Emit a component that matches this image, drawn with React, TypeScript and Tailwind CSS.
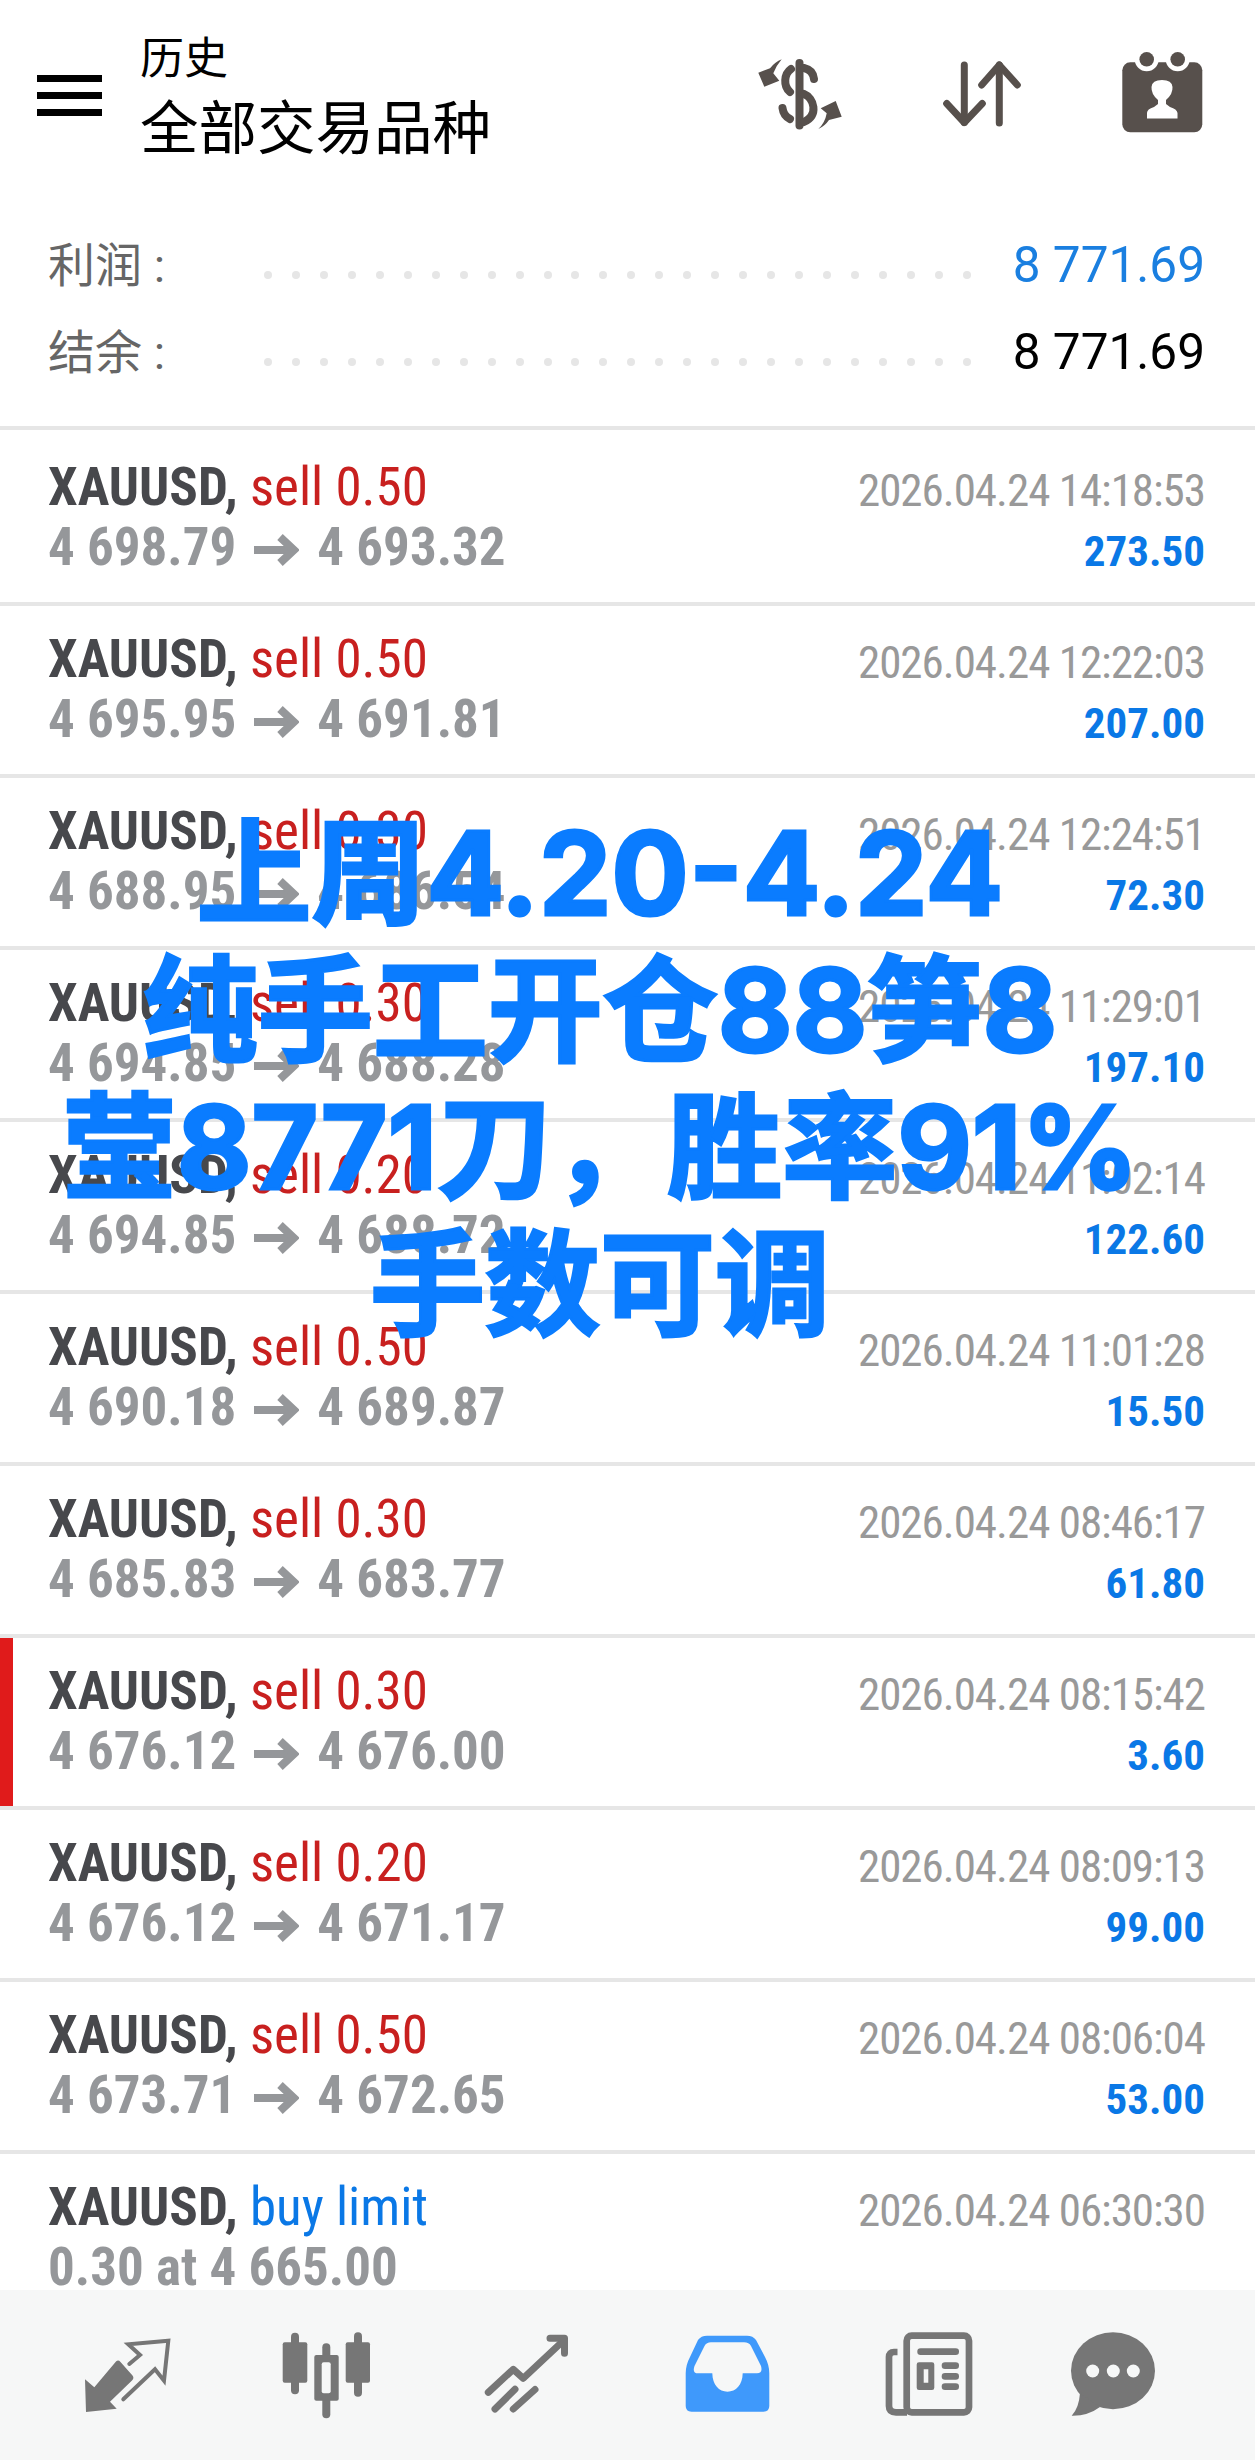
type Trade = {
  side: string;
  from: string;
  to: string;
  time: string;
  profit: string;
  flagged?: boolean;
};

const trades: Trade[] = [
  { side: 'sell 0.50', from: '4 698.79', to: '4 693.32', time: '2026.04.24 14:18:53', profit: '273.50' },
  { side: 'sell 0.50', from: '4 695.95', to: '4 691.81', time: '2026.04.24 12:22:03', profit: '207.00' },
  { side: 'sell 0.30', from: '4 688.95', to: '4 686.54', time: '2026.04.24 12:24:51', profit: '72.30' },
  { side: 'sell 0.30', from: '4 694.85', to: '4 688.28', time: '2026.04.24 11:29:01', profit: '197.10' },
  { side: 'sell 0.20', from: '4 694.85', to: '4 688.72', time: '2026.04.24 11:02:14', profit: '122.60' },
  { side: 'sell 0.50', from: '4 690.18', to: '4 689.87', time: '2026.04.24 11:01:28', profit: '15.50' },
  { side: 'sell 0.30', from: '4 685.83', to: '4 683.77', time: '2026.04.24 08:46:17', profit: '61.80' },
  { side: 'sell 0.30', from: '4 676.12', to: '4 676.00', time: '2026.04.24 08:15:42', profit: '3.60', flagged: true },
  { side: 'sell 0.20', from: '4 676.12', to: '4 671.17', time: '2026.04.24 08:09:13', profit: '99.00' },
  { side: 'sell 0.50', from: '4 673.71', to: '4 672.65', time: '2026.04.24 08:06:04', profit: '53.00' },
];

const headline = ['上周4.20-4.24', '纯手工开仓88笋8', '莹8771刀，胜率91%', '手数可调'];

function PriceArrow() {
  return (
    <svg viewBox="0 0 45 32" className="inline-block w-[45px] h-[32px] mx-[18px] align-[-1px]" fill="none" stroke="#95979a" strokeWidth="8">
      <path d="M0 16H40" />
      <path d="M26 3L40 16L26 29" />
    </svg>
  );
}

function DollarSwapIcon() {
  return (
    <svg viewBox="0 0 100 90" className="w-[100px] h-[90px]" fill="none" stroke="#57504c" strokeWidth="8" strokeLinecap="round">
      <path d="M49.5 13V75.5" />
      <path d="M54 18Q63 20 64 29" />
      <path d="M41 19C34 24 33 36 40 42" />
      <path d="M54 44C64 48 69 65 54 72" />
      <path d="M32.5 58Q33.5 66 40 69" />
      <path d="M31.7 9.3Q25 12 20 18.3L8.3 22.7L14.3 36.7L29.3 30.7L23.3 23.3Q26.7 15 31.7 9.3Z" fill="#57504c" stroke="none" />
      <path d="M68.3 79Q75 76 79 70L91.7 66.7L85.7 51L70.7 58.3L76.7 63.3Q75 73 68.3 79Z" fill="#57504c" stroke="none" />
    </svg>
  );
}

function SortIcon() {
  return (
    <svg viewBox="0 0 100 90" className="w-[100px] h-[90px]" fill="none" stroke="#57504c" strokeWidth="7" strokeLinecap="round" strokeLinejoin="round">
      <path d="M29.3 15V72.5" />
      <path d="M11.7 53.5L29.3 72.5L47.3 53.5" />
      <path d="M64.3 15V73" />
      <path d="M46.7 35L64.3 15L82.3 35" />
    </svg>
  );
}

function CalendarIcon() {
  return (
    <svg viewBox="0 0 100 90" className="w-[100px] h-[90px]">
      <rect x="10.3" y="12.3" width="80" height="70" rx="8" fill="#57504c" />
      <circle cx="34.7" cy="9.3" r="12" fill="#fff" />
      <circle cx="65.7" cy="9.3" r="12" fill="#fff" />
      <circle cx="34.7" cy="9.3" r="7.3" fill="#57504c" />
      <circle cx="65.7" cy="9.3" r="7.3" fill="#57504c" />
      <path d="M35 68.5V63Q35 59 42 57L46 54V50Q39 44 39.5 37Q40 30 50 30Q60 30 60.5 37Q61 44 54 50V54L58 57Q65 59 65.5 63V68.5Z" fill="#fff" />
    </svg>
  );
}

function TradeIcon() {
  return (
    <svg viewBox="0 0 100 100" className="w-[100px] h-[100px]" fill="#767676">
      <path d="M9 87L8 54.3L17.3 62.3L39 36.5Q41.3 34.5 43.5 37L55.5 50.5Q57.5 53 55 55.5L33 76.7L39.7 83.7Z" />
      <path d="M46.3 74.3L78 44.3L87 55.7L91.3 15.7L51.3 19.3L63 30L52.3 39" fill="none" stroke="#767676" strokeWidth="4" strokeLinecap="round" />
    </svg>
  );
}

function QuotesIcon() {
  return (
    <svg viewBox="0 0 100 100" className="w-[100px] h-[100px]" fill="#767676">
      <rect x="6.7" y="17.3" width="24.6" height="40.4" rx="2" />
      <rect x="15" y="7.7" width="8" height="61.6" rx="4" />
      <rect x="69.7" y="17.3" width="24.3" height="40.4" rx="2" />
      <rect x="78" y="7.3" width="8" height="64.4" rx="4" />
      <rect x="46.3" y="18.3" width="8" height="75" rx="4" />
      <rect x="38.3" y="30" width="24.4" height="45.7" rx="2" />
      <rect x="45.7" y="37.3" width="9" height="31" rx="2" fill="#f6f7f7" />
    </svg>
  );
}

function ChartIcon() {
  return (
    <svg viewBox="0 0 100 100" className="w-[100px] h-[100px]" fill="none" stroke="#767676" strokeWidth="7" strokeLinecap="round" strokeLinejoin="round">
      <path d="M12.3 67.3L37.3 44.3L47.3 53.3L86 17" />
      <path d="M74 13.3H88.5V28.3" />
      <path d="M19 84L39 64.3" />
      <path d="M37.3 84L59 64.5" />
    </svg>
  );
}

function InboxIcon() {
  return (
    <svg viewBox="0 0 100 100" className="w-[100px] h-[100px]" fill="#3f99fb">
      <path
        fillRule="evenodd"
        d="M30 10.7H70Q76 10.7 79 15L88 32Q92.3 40 92.3 48.3V81Q92.3 86.7 86.5 86.7H14.5Q8.7 86.7 8.7 81V48.3Q8.7 40 13 32L21 15Q24 10.7 30 10.7ZM34 17.3Q29.5 17.3 27.5 21L17.5 41Q15 48.3 21 48.3H35.3C35.5 60 42 66.7 50.5 66.7C59 66.7 65.5 60 65.7 48.3H80Q86 48.3 84 41L74 21Q72 17.3 67 17.3Z"
      />
    </svg>
  );
}

function NewsIcon() {
  return (
    <svg viewBox="0 0 100 100" className="w-[100px] h-[100px]" fill="#767676">
      <rect x="27.7" y="10.7" width="62.3" height="76.6" rx="5" fill="none" stroke="#767676" strokeWidth="6.7" />
      <path d="M18.5 27H15Q10 27 10 32V81Q10 87.3 17 87.3H28" fill="none" stroke="#767676" strokeWidth="6.7" />
      <rect x="38.3" y="23.3" width="41.7" height="6.7" rx="3.3" />
      <path fillRule="evenodd" d="M40 37.3H53Q55.3 37.3 55.3 39.5V62.8Q55.3 65 53 65H40Q37.7 65 37.7 62.8V39.5Q37.7 37.3 40 37.3ZM44.7 44.3V57.7H49.3V44.3Z" />
      <rect x="62.7" y="37.3" width="17.3" height="6.7" rx="3.3" />
      <rect x="62.7" y="48" width="17.3" height="6.7" rx="3.3" />
      <rect x="62.7" y="58.3" width="17.3" height="6.7" rx="3.3" />
    </svg>
  );
}

function ChatIcon() {
  return (
    <svg viewBox="0 0 100 100" className="w-[100px] h-[100px]" fill="#767676">
      <ellipse cx="50" cy="45.7" rx="42" ry="38.5" />
      <path d="M17 68Q16 83 8.7 90.7Q25 91 37 82Z" />
      <circle cx="29.7" cy="46" r="6.5" fill="#f6f7f7" />
      <circle cx="50.3" cy="46" r="6.5" fill="#f6f7f7" />
      <circle cx="70.3" cy="46" r="6.5" fill="#f6f7f7" />
    </svg>
  );
}

function SummaryRow({ label, value, valueClass }: { label: string; value: string; valueClass: string }) {
  return (
    <div className="flex items-center h-[87px]">
      <span className="w-[216px] shrink-0 text-[47px] leading-none text-[#666]">{label}</span>
      <div className="w-[707px] flex justify-between mt-[18px]">
        {Array.from({ length: 26 }).map((_, i) => (
          <span key={i} className="w-[8px] h-[8px] rounded-full bg-[#e6e6e6]" />
        ))}
      </div>
      <span className={`ml-auto text-[49.5px] leading-none ${valueClass}`}>{value}</span>
    </div>
  );
}

function TradeRow({ trade }: { trade: Trade }) {
  return (
    <div className="relative h-[172px] border-b-4 border-[#e6e6e6] pl-[48px] pr-[50px] pt-[23px] flex justify-between [font-stretch:condensed]">
      {trade.flagged && <div className="absolute left-0 top-0 bottom-0 w-[13px] bg-[#e01b1b]" />}
      <div>
        <div className="text-[53px] leading-[60px]">
          <span className="font-bold text-[#47484c]">XAUUSD,</span>{' '}
          <span className="text-[#c8201f]">{trade.side}</span>
        </div>
        <div className="text-[53px] leading-[60px] font-bold text-[#95979a]">
          {trade.from}
          <PriceArrow />
          {trade.to}
        </div>
      </div>
      <div className="text-right pt-[4px]">
        <div className="text-[45px] leading-[60px] tracking-[-1px] text-[#999]">{trade.time}</div>
        <div className="text-[43px] leading-[60px] font-bold text-[#0a78e6]">{trade.profit}</div>
      </div>
    </div>
  );
}

export default function App() {
  return (
    <div className="relative w-[1255px] h-[2460px] overflow-hidden bg-white flex flex-col font-['Roboto','Noto_Sans_CJK_SC',sans-serif]">
      {/* top bar */}
      <header className="h-[200px] shrink-0 pl-[37px] pr-[43px] pb-[10px] flex items-center">
        <div className="w-[65px] flex flex-col gap-[10px]">
          <div className="h-[7px] bg-black" />
          <div className="h-[7px] bg-black" />
          <div className="h-[7px] bg-black" />
        </div>
        <div className="ml-[38px] mt-[10px]">
          <div className="text-[44px] leading-[52px] text-black">历史</div>
          <div className="mt-[6px] text-[58.5px] leading-[76px] text-black">全部交易品种</div>
        </div>
        <div className="ml-auto flex items-center">
          <DollarSwapIcon />
          <div className="ml-[85px]"><SortIcon /></div>
          <div className="ml-[77px]"><CalendarIcon /></div>
        </div>
      </header>

      <section className="h-[230px] shrink-0 pt-[22px] pl-[48px] pr-[50px] border-b-4 border-[#e6e6e6]">
        <SummaryRow label="利润 :" value="8 771.69" valueClass="text-[#1a7fe0]" />
        <SummaryRow label="结余 :" value="8 771.69" valueClass="text-black" />
      </section>

      <main className="flex-1 overflow-hidden pt-[4px]">
        {trades.map((t) => (
          <TradeRow key={t.time} trade={t} />
        ))}
        {/* pending order, cut off by the tab bar */}
        <div className="pl-[48px] pr-[50px] pt-[23px] flex justify-between [font-stretch:condensed]">
          <div>
            <div className="text-[53px] leading-[60px]">
              <span className="font-bold text-[#47484c]">XAUUSD,</span>{' '}
              <span className="text-[#0a78e6]">buy limit</span>
            </div>
            <div className="text-[53px] leading-[60px] font-bold text-[#95979a]">0.30 at 4 665.00</div>
          </div>
          <div className="pt-[4px] text-[45px] leading-[60px] tracking-[-1px] text-[#999]">2026.04.24 06:30:30</div>
        </div>
      </main>

      {/* bottom tabs */}
      <nav className="h-[170px] shrink-0 bg-[#f6f7f7] pt-[35px] pl-[77px] flex items-start">
        <TradeIcon />
        <div className="ml-[99px]"><QuotesIcon /></div>
        <div className="ml-[100px]"><ChartIcon /></div>
        <div className="ml-[101px]"><InboxIcon /></div>
        <div className="ml-[102px]"><NewsIcon /></div>
        <div className="ml-[84px]"><ChatIcon /></div>
      </nav>

      {/* promo caption laid over the list */}
      <div className="absolute left-0 right-0 top-[805px] pr-[55px] text-center font-bold text-[115px] leading-[137px] text-[#0a7cff] [-webkit-text-stroke:3px_#0a7cff] font-['Inter','Noto_Sans_CJK_SC',sans-serif]">
        {headline.map((line) => (
          <div key={line}>{line}</div>
        ))}
      </div>
    </div>
  );
}
